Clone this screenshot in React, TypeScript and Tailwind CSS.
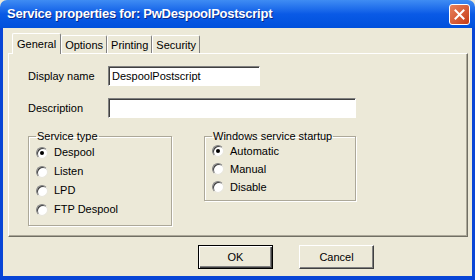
import { ReactNode } from 'react';

const font = "font-['Liberation_Sans',Arial,sans-serif]";

function Radio({ label, checked, height }: { label: string; checked?: boolean; height: string }) {
  return (
    <div className={`flex items-center gap-[6px] ${height}`}>
      <span className="relative w-[12px] h-[12px] rounded-full bg-white border border-t-[#808080] border-l-[#808080] border-r-[#e8e6dc] border-b-[#e8e6dc] shadow-[inset_1px_1px_0_#404040]">
        {checked && <span className="absolute left-[3px] top-[3px] w-[4px] h-[4px] rounded-full bg-black" />}
      </span>
      <span className="text-[11px] leading-none text-black">{label}</span>
    </div>
  );
}

function GroupBox({ title, width, height, children }: { title: string; width: string; height: string; children: ReactNode }) {
  return (
    <fieldset className={`${width} ${height} border border-[#aca899] shadow-[inset_1px_1px_0_#fff,1px_1px_0_#fff] pl-[7px]`}>
      <legend className="text-[11px] leading-[13px] px-[1px] text-black">{title}</legend>
      {children}
    </fieldset>
  );
}

function Tab({ label, active }: { label: string; active?: boolean }) {
  return (
    <div
      className={`flex items-center border-t border-l border-t-white border-l-white border-r border-r-[#808080] rounded-t-[2px] text-[11px] text-black bg-[#ECE9D8] ${
        active ? 'h-[21px] -mb-[1px] px-[4px] z-10' : 'h-[18px] pt-[1px] px-[3px]'
      }`}
    >
      {label}
    </div>
  );
}

function Button({ label, isDefault }: { label: string; isDefault?: boolean }) {
  return (
    <button
      className={`w-[75px] h-[24px] text-[11px] text-black bg-[#ECE9D8] ${
        isDefault
          ? 'border border-black shadow-[inset_1px_1px_0_#fff,inset_-1px_-1px_0_#404040,inset_-2px_-2px_0_#808080]'
          : 'border border-t-white border-l-white border-r-[#404040] border-b-[#404040] shadow-[inset_-1px_-1px_0_#808080]'
      }`}
    >
      {label}
    </button>
  );
}

export default function App() {
  return (
    <div className={`w-[475px] h-[280px] flex flex-col ${font} bg-[#ECE9D8]`}>
      {/* Title bar */}
      <div className="h-[28px] flex items-center justify-between pl-[7px] pr-[5px] rounded-t-[7px] bg-gradient-to-b from-[#3f8cf3] via-[#0a5ae6] to-[#0050dc]">
        <span className="text-white text-[13px] font-bold [text-shadow:1px_1px_0_#0a2a8a] tracking-[-0.25px]">
          Service properties for: PwDespoolPostscript
        </span>
        <div className="w-[21px] h-[21px] rounded-[3px] border border-white bg-gradient-to-br from-[#e8815c] to-[#c63a10] flex items-center justify-center">
          <svg width="11" height="11" viewBox="0 0 11 11">
            <path d="M1.5 1.5 L9.5 9.5 M9.5 1.5 L1.5 9.5" stroke="white" strokeWidth="2" strokeLinecap="square" />
          </svg>
        </div>
      </div>

      {/* Body */}
      <div className="flex-1 flex flex-col border-x-[3px] border-b-[4px] border-[#0845d6] pt-[5px] pl-[5px] pr-[4px]">
        <div className="flex items-end h-[20px] pl-[4px] relative">
          <Tab label="General" active />
          <Tab label="Options" />
          <Tab label="Printing" />
          <Tab label="Security" />
        </div>

        <div className="h-[184px] border border-t-white border-l-white border-r-[#716f64] border-b-[#716f64] shadow-[inset_-1px_-1px_0_#aca899] flex flex-col">
          <div className="flex items-center mt-[12px]">
            <span className="w-[99px] pl-[19px] text-[11px] text-black">Display name</span>
            <div className="w-[152px] h-[20px] bg-white border border-t-[#808080] border-l-[#808080] border-r-white border-b-white shadow-[inset_1px_1px_0_#404040] text-[11px] text-black pl-[3px] flex items-center">
              DespoolPostscript
            </div>
          </div>
          <div className="flex items-center mt-[12px]">
            <span className="w-[99px] pl-[19px] text-[11px] text-black">Description</span>
            <div className="w-[248px] h-[20px] bg-white border border-t-[#808080] border-l-[#808080] border-r-white border-b-white shadow-[inset_1px_1px_0_#404040]" />
          </div>

          <div className="flex items-start gap-[32px] ml-[19px] mt-[12px]">
            <GroupBox title="Service type" width="w-[144px]" height="h-[96px]">
              <Radio label="Despool" checked height="h-[19px]" />
              <Radio label="Listen" height="h-[19px]" />
              <Radio label="LPD" height="h-[19px]" />
              <Radio label="FTP Despool" height="h-[19px]" />
            </GroupBox>
            <GroupBox title="Windows service startup" width="w-[152px]" height="h-[71px]">
              <div className="-mt-[1px]">
                <Radio label="Automatic" checked height="h-[18px]" />
                <Radio label="Manual" height="h-[18px]" />
                <Radio label="Disable" height="h-[18px]" />
              </div>
            </GroupBox>
          </div>
        </div>

        <div className="flex gap-[26px] mt-[8px] pl-[190px]">
          <Button label="OK" isDefault />
          <Button label="Cancel" />
        </div>
      </div>
    </div>
  );
}
